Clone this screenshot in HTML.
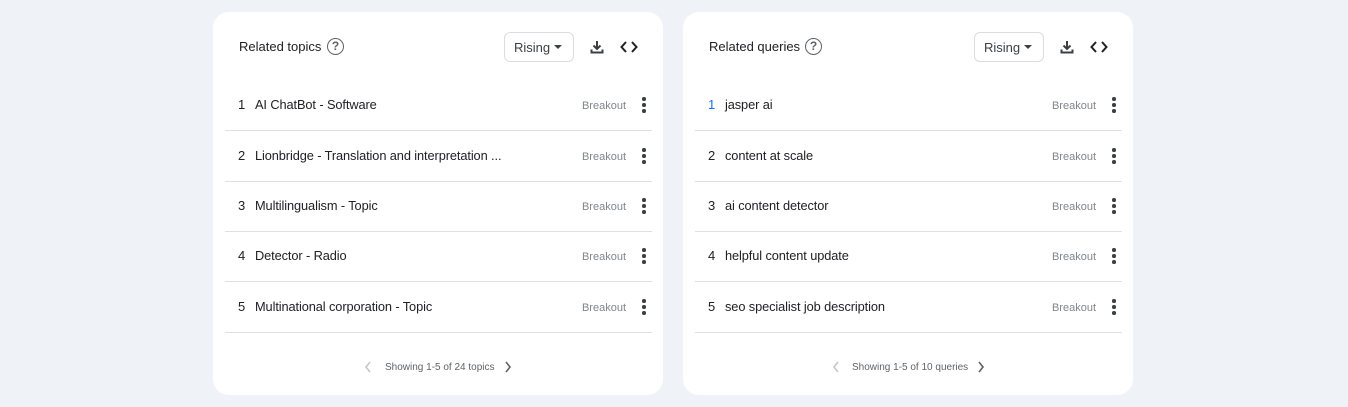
<!DOCTYPE html>
<html><head><style>
*{margin:0;padding:0;box-sizing:border-box}
body{width:1348px;height:407px;background:#eff2f7;font-family:"Liberation Sans",sans-serif;position:relative;overflow:hidden;color:#202124}
.card{position:absolute;top:12px;width:450px;height:383px;background:#fff;border-radius:16px}
.t{position:absolute;font-size:13px;white-space:nowrap}
.title{left:26px;top:27px;font-size:13px;color:#202124}
.help{position:absolute;left:114px;top:26px;width:17px;height:17px;border:1.6px solid #5f6368;border-radius:50%;font-size:12px;font-weight:bold;color:#5f6368;text-align:center;line-height:14px}
.dd{position:absolute;left:291px;top:20px;width:70px;height:30px;border:1px solid #dadce0;border-radius:6px;font-size:13px;color:#3c4043;padding:7px 0 0 9px}
.dd:after{content:"";position:absolute;right:11px;top:12px;border:4px solid transparent;border-top:4px solid #3c4043;border-bottom:0}
.row{position:absolute;left:12px;width:427px;height:50px;border-bottom:1px solid #e0e0e0}
.rk{position:absolute;left:13px;top:16px;font-size:13px}
.lb{position:absolute;left:30px;top:16px;font-size:12.8px;letter-spacing:-0.1px;color:#202124}
.br{position:absolute;right:26px;top:19px;font-size:11px;color:#80868b}
.dots{position:absolute;right:6px;top:16px;width:4px}
.dots i{display:block;width:3.5px;height:3.5px;border-radius:50%;background:#3c4043;margin-bottom:2.5px}
.foot{position:absolute;top:350px;font-size:10px;color:#5f6368}
</style></head><body>

<div class="card" style="left:213px">
 <div class="t title">Related topics</div><div class="help">?</div>
 <div class="dd">Rising</div>
 <svg style="position:absolute;left:376px;top:27px" width="16" height="16" viewBox="0 0 16 16"><path d="M8 2v8M4.5 6.5L8 10l3.5-3.5M2.5 10.5v3h11v-3" stroke="#3c4043" stroke-width="2" fill="none"/></svg>
 <svg style="position:absolute;left:407px;top:28px" width="18" height="14" viewBox="0 0 18 14"><path d="M6 2L1.5 7 6 12M12 2l4.5 5L12 12" stroke="#202124" stroke-width="2" fill="none"/></svg>
 <div class="row" style="top:69px"><span class="rk">1</span><span class="lb">AI ChatBot - Software</span><span class="br">Breakout</span><span class="dots"><i></i><i></i><i></i></span></div>
 <div class="row" style="top:120px"><span class="rk">2</span><span class="lb">Lionbridge - Translation and interpretation ...</span><span class="br">Breakout</span><span class="dots"><i></i><i></i><i></i></span></div>
 <div class="row" style="top:170px"><span class="rk">3</span><span class="lb">Multilingualism - Topic</span><span class="br">Breakout</span><span class="dots"><i></i><i></i><i></i></span></div>
 <div class="row" style="top:220px"><span class="rk">4</span><span class="lb">Detector - Radio</span><span class="br">Breakout</span><span class="dots"><i></i><i></i><i></i></span></div>
 <div class="row" style="top:271px"><span class="rk">5</span><span class="lb">Multinational corporation - Topic</span><span class="br">Breakout</span><span class="dots"><i></i><i></i><i></i></span></div>
 <svg style="position:absolute;left:151px;top:349px" width="8" height="12"><path d="M6 1L2 6l4 5" stroke="#c4c7c5" stroke-width="1.6" fill="none"/></svg>
 <div class="foot" style="left:172px">Showing 1-5 of 24 topics</div>
 <svg style="position:absolute;left:291px;top:349px" width="8" height="12"><path d="M2 1l4 5-4 5" stroke="#5f6368" stroke-width="1.6" fill="none"/></svg>
</div>

<div class="card" style="left:683px">
 <div class="t title">Related queries</div><div class="help" style="left:122px">?</div>
 <div class="dd">Rising</div>
 <svg style="position:absolute;left:376px;top:27px" width="16" height="16" viewBox="0 0 16 16"><path d="M8 2v8M4.5 6.5L8 10l3.5-3.5M2.5 10.5v3h11v-3" stroke="#3c4043" stroke-width="2" fill="none"/></svg>
 <svg style="position:absolute;left:407px;top:28px" width="18" height="14" viewBox="0 0 18 14"><path d="M6 2L1.5 7 6 12M12 2l4.5 5L12 12" stroke="#202124" stroke-width="2" fill="none"/></svg>
 <div class="row" style="top:69px"><span class="rk" style="color:#1a73e8">1</span><span class="lb">jasper ai</span><span class="br">Breakout</span><span class="dots"><i></i><i></i><i></i></span></div>
 <div class="row" style="top:120px"><span class="rk">2</span><span class="lb">content at scale</span><span class="br">Breakout</span><span class="dots"><i></i><i></i><i></i></span></div>
 <div class="row" style="top:170px"><span class="rk">3</span><span class="lb">ai content detector</span><span class="br">Breakout</span><span class="dots"><i></i><i></i><i></i></span></div>
 <div class="row" style="top:220px"><span class="rk">4</span><span class="lb">helpful content update</span><span class="br">Breakout</span><span class="dots"><i></i><i></i><i></i></span></div>
 <div class="row" style="top:271px"><span class="rk">5</span><span class="lb">seo specialist job description</span><span class="br">Breakout</span><span class="dots"><i></i><i></i><i></i></span></div>
 <svg style="position:absolute;left:149px;top:349px" width="8" height="12"><path d="M6 1L2 6l4 5" stroke="#c4c7c5" stroke-width="1.6" fill="none"/></svg>
 <div class="foot" style="left:169px">Showing 1-5 of 10 queries</div>
 <svg style="position:absolute;left:294px;top:349px" width="8" height="12"><path d="M2 1l4 5-4 5" stroke="#5f6368" stroke-width="1.6" fill="none"/></svg>
</div>
</body></html>
